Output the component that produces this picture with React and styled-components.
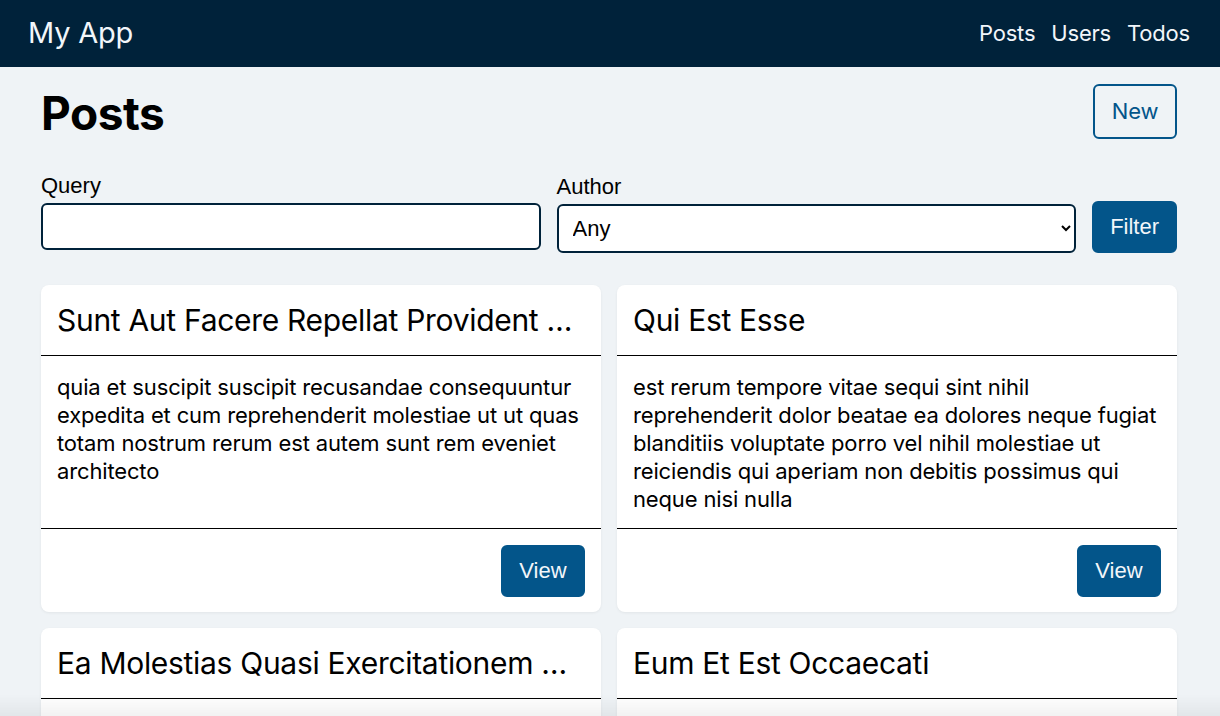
import styled, { createGlobalStyle } from "styled-components";

const GlobalStyles = createGlobalStyle`
  html, body {
    margin: 0;
    padding: 0;
    background: #eff3f6;
    font-family: Inter, "Noto Sans", sans-serif;
    color: #000;
  }
  * { box-sizing: border-box; }
`;

const navy = "#00223a";
const blue = "#03558a";
const formFont = `"Liberation Sans", Arial, sans-serif`;

const posts = [
  {
    title: "Sunt Aut Facere Repellat Provident Occaecati Excepturi Optio Reprehenderit",
    body: "quia et suscipit suscipit recusandae consequuntur expedita et cum reprehenderit molestiae ut ut quas totam nostrum rerum est autem sunt rem eveniet architecto",
  },
  {
    title: "Qui Est Esse",
    body: "est rerum tempore vitae sequi sint nihil reprehenderit dolor beatae ea dolores neque fugiat blanditiis voluptate porro vel nihil molestiae ut reiciendis qui aperiam non debitis possimus qui neque nisi nulla",
  },
  {
    title: "Ea Molestias Quasi Exercitationem Repellat Qui Ipsa Sit Aut",
    body: "et iusto sed quo iure voluptatem occaecati omnis eligendi aut ad voluptatem doloribus vel accusantium quis pariatur molestiae porro eius odio et labore et velit aut",
  },
  {
    title: "Eum Et Est Occaecati",
    body: "ullam et saepe reiciendis voluptatem adipisci sit amet autem assumenda provident rerum culpa quis hic commodi nesciunt rem tenetur doloremque ipsam iure quis sunt voluptatem rerum illo velit",
  },
];

const TopBar = styled.header`
  display: flex;
  align-items: center;
  justify-content: space-between;
  height: 67px;
  padding: 0 30px 2px 28px;
  background: ${navy};
  color: #f2f6fa;
`;

const Brand = styled.div`
  font-size: 29px;
  font-weight: 400;
  letter-spacing: -0.2px;
`;

const Nav = styled.nav`
  display: flex;
  gap: 16px;
`;

const NavLink = styled.a`
  color: #f2f6fa;
  text-decoration: none;
  font-size: 22px;
  letter-spacing: -0.2px;
`;

const Main = styled.main`
  padding: 16px 43px 40px 41px;
`;

const TitleRow = styled.div`
  display: flex;
  align-items: center;
  justify-content: space-between;
  height: 56px;
`;

const PageTitle = styled.h1`
  margin: 4px 0 0;
  font-size: 46px;
  font-weight: 700;
  letter-spacing: -0.5px;
`;

const Button = styled.button`
  height: ${(p) => (p.$outline ? "55px" : "52px")};
  min-width: 84px;
  padding: 0 16px;
  border-radius: 6px;
  border: 2px solid ${blue};
  background: ${(p) => (p.$outline ? "transparent" : blue)};
  color: ${(p) => (p.$outline ? blue : "#f2f6fa")};
  font-family: ${(p) => (p.$outline ? "inherit" : formFont)};
  font-size: 22px;
  letter-spacing: ${(p) => (p.$outline ? "-0.2px" : "0")};
  cursor: pointer;
`;

const FilterRow = styled.form`
  display: flex;
  align-items: flex-end;
  gap: 16px;
  margin-top: 34px;
`;

const Field = styled.label`
  display: flex;
  flex-direction: column;
  gap: 4px;
  flex: ${(p) => p.$basis}px 1 1;
  min-width: 0;
  font-family: ${formFont};
  font-size: 22px;
  padding-bottom: ${(p) => p.$pb || 0}px;
`;

const Input = styled.input`
  height: 47px;
  border: 2px solid ${navy};
  border-radius: 6px;
  background: #fff;
  font-family: ${formFont};
  font-size: 22px;
  padding: 0 12px;
`;

const Select = styled.select`
  height: 49px;
  border: 2px solid ${navy};
  border-radius: 6px;
  background: #fff;
  font-family: ${formFont};
  font-size: 22px;
  padding: 0 10px;
  color: #000;
`;

const Grid = styled.div`
  display: grid;
  grid-template-columns: 1fr 1fr;
  gap: 16px;
  margin-top: 32px;
`;

const Card = styled.article`
  display: flex;
  flex-direction: column;
  background: #fff;
  border-radius: 8px;
  box-shadow: 0 1px 3px rgba(0, 0, 0, 0.06);
  overflow: hidden;
`;

const CardHeader = styled.div`
  padding: 16px;
  height: 71px;
  border-bottom: 1px solid #000;
`;

const CardTitle = styled.h2`
  margin: 0;
  font-size: 30px;
  font-weight: 400;
  line-height: 38px;
  letter-spacing: -0.3px;
  white-space: nowrap;
  overflow: hidden;
  text-overflow: ellipsis;
`;

const CardBody = styled.p`
  flex: 1;
  margin: 0;
  padding: 17px 16px 15px;
  font-size: 22px;
  line-height: 28px;
  letter-spacing: -0.15px;
`;

const CardFooter = styled.div`
  display: flex;
  justify-content: flex-end;
  padding: 16px 16px 15px;
  border-top: 1px solid #000;
`;

const BottomFade = styled.div`
  position: fixed;
  left: 0;
  right: 0;
  bottom: 0;
  height: 22px;
  pointer-events: none;
  background: linear-gradient(to bottom, rgba(0, 0, 0, 0), rgba(0, 0, 0, 0.05));
`;

export default function App() {
  return (
    <>
      <GlobalStyles />
      <TopBar>
        <Brand>My App</Brand>
        <Nav>
          <NavLink href="#">Posts</NavLink>
          <NavLink href="#">Users</NavLink>
          <NavLink href="#">Todos</NavLink>
        </Nav>
      </TopBar>
      <Main>
        <TitleRow>
          <PageTitle>Posts</PageTitle>
          <Button $outline>New</Button>
        </TitleRow>
        <FilterRow onSubmit={(e) => e.preventDefault()}>
          <Field $basis={500} $pb={3}>
            Query
            <Input type="text" />
          </Field>
          <Field $basis={520}>
            Author
            <Select defaultValue="any">
              <option value="any">Any</option>
            </Select>
          </Field>
          <Button type="submit">Filter</Button>
        </FilterRow>
        <Grid>
          {posts.map((p) => (
            <Card key={p.title}>
              <CardHeader>
                <CardTitle>{p.title}</CardTitle>
              </CardHeader>
              <CardBody>{p.body}</CardBody>
              <CardFooter>
                <Button>View</Button>
              </CardFooter>
            </Card>
          ))}
        </Grid>
      </Main>
      <BottomFade />
    </>
  );
}
